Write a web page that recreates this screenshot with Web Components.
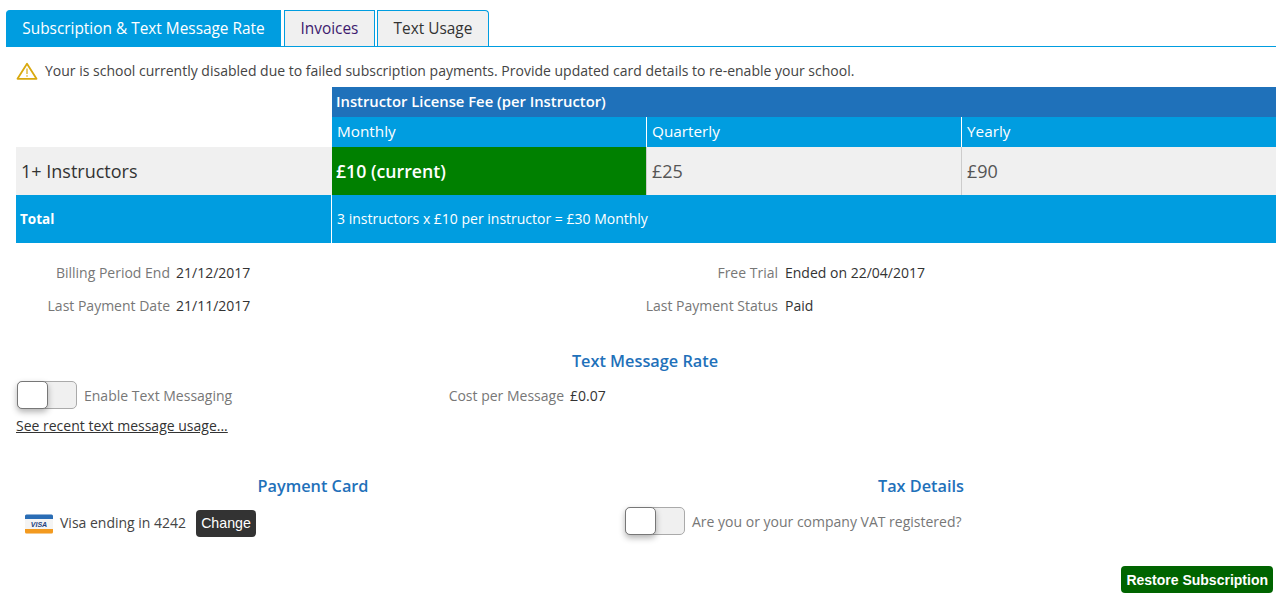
<!DOCTYPE html>
<html lang="en">
  <head>
    <meta charset="UTF-8" />
    <title>Subscription</title>
    <style>
      html, body { margin: 0; padding: 0; background: #fff; }
      body { font-family: "Open Sans", sans-serif; font-size: 14px; color: #333; }
    </style>
  </head>
  <body>
    <billing-page></billing-page>

    <script>
      class BillingTab extends HTMLElement {
        constructor() {
          super()
          this.attachShadow({ mode: "open" }).innerHTML = `
            <style>
              :host {
                display: block;
                box-sizing: border-box;
                height: 36px;
                line-height: 35px;
                text-align: center;
                font-size: 15.4px;
                color: #333;
                background: #f0f0f0;
                border: 1px solid #009de0;
                border-bottom: 0;
                white-space: nowrap;
              }
              :host([active]) { background: #009de0; color: #fff; }
              :host([first]) { border-top-left-radius: 4px; }
              :host([last]) { border-top-right-radius: 4px; }
              :host([visited]) { color: #3d1a6e; }
            </style>
            <slot></slot>
          `
        }
      }
      customElements.define("billing-tab", BillingTab)

      class SwitchToggle extends HTMLElement {
        constructor() {
          super()
          this.attachShadow({ mode: "open" }).innerHTML = `
            <style>
              :host {
                display: block;
                position: relative;
                box-sizing: border-box;
                width: 60px;
                height: 28px;
                background: #f0f0f0;
                border: 1px solid #aaa;
                border-radius: 5px;
                flex: none;
              }
              .knob {
                position: absolute;
                left: -1px;
                top: -1px;
                box-sizing: border-box;
                width: 31px;
                height: 28px;
                background: #fff;
                border: 1px solid #777;
                border-radius: 5px;
                box-shadow: 0 3px 6px rgba(0, 0, 0, 0.3);
              }
            </style>
            <div class="knob"></div>
          `
        }
      }
      customElements.define("switch-toggle", SwitchToggle)

      class InfoField extends HTMLElement {
        constructor() {
          super()
          this.attachShadow({ mode: "open" }).innerHTML = `
            <style>
              :host {
                display: grid;
                grid-template-columns: var(--label-width, 154px) auto;
                column-gap: var(--label-gap, 6px);
                height: 33px;
                line-height: 33px;
                font-size: 14px;
                white-space: nowrap;
              }
              .label { text-align: right; color: #777; }
              .value { color: #333; }
            </style>
            <div class="label"><slot name="label"></slot></div>
            <div class="value"><slot></slot></div>
          `
        }
      }
      customElements.define("info-field", InfoField)

      class SectionTitle extends HTMLElement {
        constructor() {
          super()
          this.attachShadow({ mode: "open" }).innerHTML = `
            <style>
              :host {
                display: block;
                text-align: center;
                font-size: 16.3px;
                font-weight: 600;
                line-height: 22px;
                color: #1f71ba;
              }
            </style>
            <slot></slot>
          `
        }
      }
      customElements.define("section-title", SectionTitle)

      class ActionButton extends HTMLElement {
        constructor() {
          super()
          this.attachShadow({ mode: "open" }).innerHTML = `
            <style>
              :host {
                display: inline-block;
                padding: 0 5px;
                height: 27px;
                line-height: 27px;
                border-radius: 4px;
                background: #333;
                color: #fff;
                font-family: "Liberation Sans", Arial, sans-serif;
                font-size: 14.2px;
                white-space: nowrap;
              }
              :host([primary]) { background: #006400; font-weight: 700; font-size: 14px; line-height: 28px; }
            </style>
            <slot></slot>
          `
        }
      }
      customElements.define("action-button", ActionButton)

      class FeeTable extends HTMLElement {
        constructor() {
          super()
          this.attachShadow({ mode: "open" }).innerHTML = `
            <style>
              :host {
                display: grid;
                grid-template-columns: 316px 314px 315px 315px;
                grid-template-rows: 30px 30px 48px 48px;
                margin-left: 10px;
                font-size: 14px;
              }
              div { display: flex; align-items: center; padding-left: 4px; box-sizing: border-box; white-space: nowrap; }
              .head { grid-column: 2 / 5; background: #1f71ba; color: #fff; font-weight: 600; font-size: 14.8px; padding-bottom: 2px; }
              .blue { background: #009de0; color: #fff; }
              .sub { font-size: 15.3px; padding-left: 5px; padding-bottom: 2px; }
              .grey { background: #f0f0f0; color: #555; font-size: 18px; padding-left: 5px; }
              .sep { border-left: 1px solid #fff; }
              .greysep { border-left: 1px solid #ccc; }
              .rowname { color: #333; font-size: 18px; }
              .current { background: #008000; color: #fff; font-size: 17.7px; font-weight: 600; }
              .total { font-weight: 700; font-size: 13.5px; padding-bottom: 1px; }
              .sum { grid-column: 2 / 5; font-size: 14px; margin-left: -1px; padding-left: 5px; padding-bottom: 2px; }
              .blank { grid-row: 1 / 3; }
            </style>
            <div class="blank"></div>
            <div class="head">Instructor License Fee (per Instructor)</div>
            <div class="blue sub">Monthly</div>
            <div class="blue sub sep">Quarterly</div>
            <div class="blue sub sep">Yearly</div>
            <div class="grey rowname">1+ Instructors</div>
            <div class="current">£10 (current)</div>
            <div class="grey greysep">£25</div>
            <div class="grey greysep">£90</div>
            <div class="blue total">Total</div>
            <div class="blue sep sum">3 instructors x £10 per instructor = £30 Monthly</div>
          `
        }
      }
      customElements.define("fee-table", FeeTable)

      class BillingPage extends HTMLElement {
        constructor() {
          super()
          this.attachShadow({ mode: "open" }).innerHTML = `
            <style>
              :host { display: block; padding: 10px 7px 0 6px; height: 593px; box-sizing: content-box; }
              .tabs { display: flex; gap: 2px; border-bottom: 1px solid #009de0; }
              .tabs billing-tab:first-child { margin-right: 1px; }
              .notice {
                display: flex;
                align-items: center;
                gap: 7px;
                box-sizing: border-box;
                height: 40px;
                padding: 7px 0 0 10px;
                font-size: 14px;
                color: #444;
              }
              .fields {
                display: grid;
                grid-template-columns: 609px 1fr;
                margin: 13px 0 0 10px;
              }
              .second { --label-width: 153px; --label-gap: 7px; }
              .rate { margin: 28px 0 0; width: 1278px; }
              .sms { display: grid; grid-template-columns: 320px 1fr; margin: 7px 0 0 10px; height: 29px; align-items: center; }
              .sms info-field { margin-bottom: 2px; }
              .with-toggle { display: flex; align-items: center; gap: 7px; font-size: 14px; color: #777; }
              .sms .with-toggle { margin-bottom: 2px; }
              .sms switch-toggle { margin: 0 0 2px 1px; }
              .usage { display: block; margin: 9px 0 0 10px; font-size: 14px; line-height: 18px; color: #333; text-decoration: underline; }
              .cols { display: grid; grid-template-columns: 609px 651px; margin: 40px 0 0 10px; }
              .card { display: flex; align-items: center; height: 27px; margin-top: 13px; padding-left: 9px; font-size: 14px; color: #444; }
              .card svg { margin-right: 7px; }
              .card span { margin-bottom: 2px; }
              .card action-button { margin-left: 10px; }
              .vat { margin-top: 9px; height: 30px; }
              .restore { display: flex; justify-content: flex-end; margin: 29px 3px 0 0; }
              .pay-title { width: 594px; }
              .tax-title { width: 592px; }
            </style>
            <div class="tabs">
              <billing-tab active first style="width:275px">Subscription &amp; Text Message Rate</billing-tab>
              <billing-tab visited style="width:91px">Invoices</billing-tab>
              <billing-tab last style="width:112px">Text Usage</billing-tab>
            </div>
            <div class="notice">
              <svg width="22" height="18" viewBox="0 0 22 18" aria-hidden="true">
                <path d="M11 1.8 1.5 16.8h19z" fill="none" stroke="#d9a90f" stroke-width="1.8" stroke-linejoin="round"/>
                <path d="M11 6.5v5.5M11 13.2v1.5" stroke="#d9a90f" stroke-width="1.2"/>
              </svg>
              <span>Your is school currently disabled due to failed subscription payments. Provide updated card details to re-enable your school.</span>
            </div>
            <fee-table></fee-table>
            <div class="fields">
              <info-field><span slot="label">Billing Period End</span>21/12/2017</info-field>
              <info-field class="second"><span slot="label">Free Trial</span>Ended on 22/04/2017</info-field>
              <info-field><span slot="label">Last Payment Date</span>21/11/2017</info-field>
              <info-field class="second"><span slot="label">Last Payment Status</span>Paid</info-field>
            </div>
            <section-title class="rate">Text Message Rate</section-title>
            <div class="sms">
              <div class="with-toggle"><switch-toggle></switch-toggle>Enable Text Messaging</div>
              <info-field style="--label-width:228px"><span slot="label">Cost per Message</span>£0.07</info-field>
            </div>
            <a class="usage">See recent text message usage...</a>
            <div class="cols">
              <div>
                <section-title class="pay-title">Payment Card</section-title>
                <div class="card">
                  <svg width="28" height="20" viewBox="0 0 28 20" aria-hidden="true">
                    <rect x="0" y="0.5" width="28" height="19" rx="1.5" fill="#f4f4f4"/>
                    <path d="M0 2a1.5 1.5 0 0 1 1.5-1.5h25A1.5 1.5 0 0 1 28 2v3H0z" fill="#2a6db5"/>
                    <path d="M0 15h28v3a1.5 1.5 0 0 1-1.5 1.5h-25A1.5 1.5 0 0 1 0 18z" fill="#f39a1f"/>
                    <text x="14" y="13" text-anchor="middle" font-family="Liberation Sans" font-size="7" font-weight="700" font-style="italic" fill="#22427f">VISA</text>
                  </svg>
                  <span>Visa ending in 4242</span>
                  <action-button>Change</action-button>
                </div>
              </div>
              <div>
                <section-title class="tax-title">Tax Details</section-title>
                <div class="with-toggle vat"><switch-toggle></switch-toggle>Are you or your company VAT registered?</div>
              </div>
            </div>
            <div class="restore"><action-button primary>Restore Subscription</action-button></div>
          `
        }
      }
      customElements.define("billing-page", BillingPage)
    </script>
  </body>
</html>
